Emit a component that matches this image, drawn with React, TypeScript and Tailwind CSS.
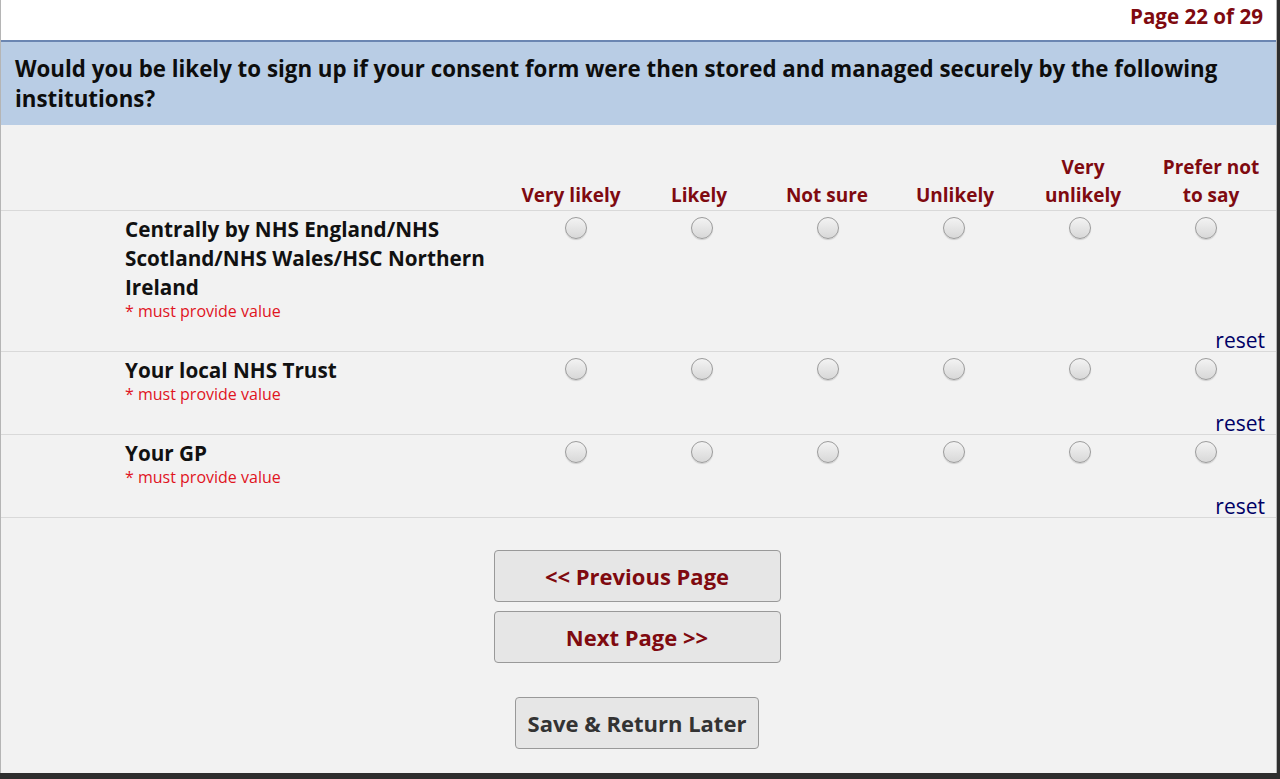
import React from 'react';

const columns = [
  ['Very likely'],
  ['Likely'],
  ['Not sure'],
  ['Unlikely'],
  ['Very', 'unlikely'],
  ['Prefer not', 'to say'],
];

const rows = [
  { id: 'central', label: 'Centrally by NHS England/NHS Scotland/NHS Wales/HSC Northern Ireland' },
  { id: 'trust', label: 'Your local NHS Trust' },
  { id: 'gp', label: 'Your GP' },
];

const Radio = ({ name }: { name: string }) => (
  <input
    type="radio"
    name={name}
    className="appearance-none w-[22px] h-[22px] rounded-full border-[1.5px] border-[#9c9c9c] bg-gradient-to-b from-[#f3f3f3] to-[#d8d8d8] shadow-[0_1px_1px_rgba(0,0,0,0.15)]"
  />
);

const MatrixRow = ({ id, label }: { id: string; label: string }) => (
  <div className="border-b border-[#d9d9d9]">
    <div className="flex">
      <div className="w-[512px] shrink-0 pl-[124px] pr-3 pt-[4px]">
        <div className="text-[20.7px] leading-[29px] font-bold text-[#111]">{label}</div>
        <div className="text-[16px] leading-[18px] text-[#e0141e]">* must provide value</div>
      </div>
      <div className="flex pt-[6px]">
        {columns.map((c) => (
          <div key={c.join()} className="w-[126px] flex justify-center">
            <Radio name={id} />
          </div>
        ))}
      </div>
    </div>
    <div className="flex justify-end pr-[11px] mt-[9px]">
      <a className="text-[21px] leading-[22px] text-[#000066]">reset</a>
    </div>
  </div>
);

export default function App() {
  return (
    <div className="h-[779px] overflow-hidden bg-[#2e2e2e]" style={{ fontFamily: '"Open Sans", "Noto Sans", sans-serif' }}>
      <div className="w-[1277px] h-[773px] bg-[#f2f2f2] border-l border-r border-[#b5b5b5]">
        <div className="h-[40px] bg-white flex justify-end items-start pr-[13px] pt-[2px]">
          <span className="text-[20.6px] leading-[28px] font-bold text-[#7f0a10]">Page 22 of 29</span>
        </div>

        <div className="bg-[#b9cde5] border-t-2 border-[#6b86b2] pl-[14px] pr-6 pt-[12px] pb-[11px]">
          <h2 className="text-[22.3px] leading-[30px] font-bold text-[#0d0d0d]">
            Would you be likely to sign up if your consent form were then stored and managed securely by the following
            institutions?
          </h2>
        </div>

        <div className="flex items-end pt-[28px] pb-[1px] border-b border-[#d9d9d9]">
          <div className="w-[506px] shrink-0" />
          {columns.map((c) => (
            <div key={c.join()} className="w-[128px] text-center text-[19px] leading-[28px] font-bold text-[#7f0a10]">
              {c.map((l) => (
                <div key={l}>{l}</div>
              ))}
            </div>
          ))}
        </div>

        {rows.map((r) => (
          <MatrixRow key={r.id} {...r} />
        ))}

        <div className="flex flex-col items-center pt-[32px] pr-[3px]">
          <button className="w-[287px] h-[52px] rounded-[4px] border-[1.5px] border-[#999] bg-[#e6e6e6] text-[22px] font-bold text-[#7f0a10]">
            &lt;&lt; Previous Page
          </button>
          <button className="mt-[9px] w-[287px] h-[52px] rounded-[4px] border-[1.5px] border-[#999] bg-[#e6e6e6] text-[22px] font-bold text-[#7f0a10]">
            Next Page &gt;&gt;
          </button>
          <button className="mt-[34px] w-[244px] h-[52px] rounded-[4px] border-[1.5px] border-[#999] bg-[#e6e6e6] text-[22px] font-bold text-[#333]">
            Save &amp; Return Later
          </button>
        </div>
      </div>
    </div>
  );
}
